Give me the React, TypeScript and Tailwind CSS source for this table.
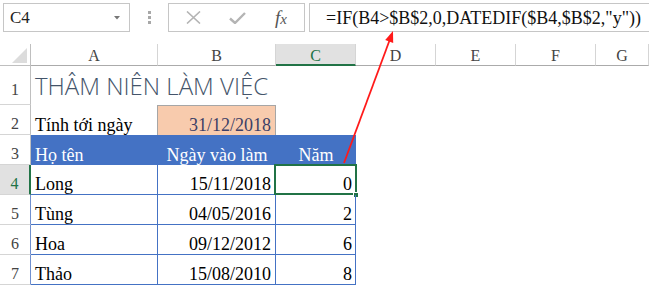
import React from "react";

const serif = "font-['Liberation_Serif','Times_New_Roman',serif]";

const cols = ["A", "B", "C", "D", "E", "F", "G"];

type Row = { name: string; date: string; years: number };

const rows: Row[] = [
  { name: "Long", date: "15/11/2018", years: 0 },
  { name: "Tùng", date: "04/05/2016", years: 2 },
  { name: "Hoa", date: "09/12/2012", years: 6 },
  { name: "Thảo", date: "15/08/2010", years: 8 },
];

const gridCols = "grid grid-cols-[31px_127px_118px_80px_80px_80px_80px_1fr]";

function RowHead({ n, h, pb, active, edge }: { n: number; h: string; pb: string; active?: boolean; edge?: string }) {
  return (
    <div
      className={`flex items-end justify-center border-b border-b-[#d5d5d5] text-[16px] leading-[16px] ${h} ${pb} ${
        active ? "border-r-2 border-r-[#217346] bg-[#e1e1e1] text-[#217346]" : `border-r ${edge ?? "border-r-[#bfbfbf]"} text-[#444]`
      }`}
    >
      {n}
    </div>
  );
}

function Toolbar() {
  return (
    <div className={`flex h-[29px] items-stretch ${serif}`}>
      <div className="ml-[3px] flex w-[127px] items-center justify-between border border-[#c6c6c6] pl-[6px] pr-[9px]">
        <span className="text-[17px] leading-none text-[#222]">C4</span>
        <svg width="6" height="4" viewBox="0 0 6 4">
          <path d="M0 0H6L3 3.5Z" fill="#777" />
        </svg>
      </div>
      <div className="flex w-[38px] flex-col items-center justify-center gap-[2px]">
        <span className="h-[3px] w-[3px] bg-[#a8a8a8]" />
        <span className="h-[3px] w-[3px] bg-[#a8a8a8]" />
        <span className="h-[3px] w-[3px] bg-[#a8a8a8]" />
      </div>
      <div className="flex w-[137px] items-center border border-[#c6c6c6]">
        <div className="flex w-[46px] justify-center pl-[2px]">
          <svg width="15" height="13" viewBox="0 0 15 13">
            <path d="M1 0.5L14 12.5M14 0.5L1 12.5" stroke="#b4b4b4" strokeWidth="1.6" />
          </svg>
        </div>
        <div className="flex w-[44px] justify-center">
          <svg width="17" height="12" viewBox="0 0 17 12">
            <path d="M1 6.5L6 11L16 1" stroke="#b4b4b4" strokeWidth="2.4" fill="none" />
          </svg>
        </div>
        <div className="flex w-[44px] justify-center">
          <span className="text-[19px] italic leading-none text-[#555]">
            f<span className="text-[15px]">x</span>
          </span>
        </div>
      </div>
      <div className="ml-[4px] flex flex-1 items-center border border-r-0 border-[#c6c6c6] pl-[16px]">
        <span className="text-[18px] leading-none text-[#111]">=IF(B4&gt;$B$2,0,DATEDIF($B4,$B$2,"y"))</span>
      </div>
    </div>
  );
}

function ColumnHeader() {
  return (
    <div className={`${gridCols} mt-[12px] h-[22px] ${serif}`}>
      <div className="relative border-r border-b border-[#bfbfbf]">
        <svg className="absolute left-[12px] top-[4px]" width="15" height="15" viewBox="0 0 15 15">
          <path d="M15 0V15H0Z" fill="#dcdcdc" />
        </svg>
      </div>
      {cols.map((c) =>
        c === "C" ? (
          <div
            key={c}
            className="flex items-end justify-center border-r border-r-[#d5d5d5] border-b-2 border-b-[#217346] bg-[#e1e1e1] text-[16px] leading-[16px] text-[#217346]"
          >
            {c}
          </div>
        ) : (
          <div
            key={c}
            className="flex items-end justify-center border-r border-b border-r-[#d5d5d5] border-b-[#ababab] pb-[1px] text-[16px] leading-[16px] text-[#444]"
          >
            {c}
          </div>
        )
      )}
    </div>
  );
}

function Blank({ n }: { n: number }) {
  return (
    <>
      {Array.from({ length: n }).map((_, i) => (
        <div key={i} />
      ))}
    </>
  );
}

export default function App() {
  return (
    <div className="relative h-[289px] w-[649px] overflow-hidden bg-white pt-[3px]">
      <Toolbar />
      <ColumnHeader />

      <div className={serif}>
        {/* row 1 */}
        <div className={`${gridCols} h-[39px]`}>
          <RowHead n={1} h="h-[39px]" pb="pb-[6px]" />
          <div className="flex items-end whitespace-nowrap pl-[4px] pb-[1px]">
            <span className="font-['Open_Sans','Noto_Sans',sans-serif] text-[24px] font-light text-[#44546a]">
              THÂM NIÊN LÀM VIỆC
            </span>
          </div>
          <Blank n={6} />
        </div>

        {/* row 2 */}
        <div className={`${gridCols} h-[30px]`}>
          <RowHead n={2} h="h-[30px]" pb="pb-[2px]" />
          <div className="flex items-end border-r border-r-[#a6a6a6] px-[4px] pb-[1px] text-[18px] leading-[18px] whitespace-nowrap text-black">
            Tính tới ngày
          </div>
          <div className="flex items-end justify-end border-t border-r border-[#a6a6a6] bg-[#f8cbad] px-[4px] pb-[1px] text-[18px] leading-[18px] text-[#3d3f66]">
            31/12/2018
          </div>
          <Blank n={5} />
        </div>

        {/* row 3 */}
        <div className={`${gridCols} h-[30px]`}>
          <RowHead n={3} h="h-[30px]" pb="pb-[2px]" />
          <div className="flex items-end bg-[#4472c4] px-[4px] pb-[1px] text-[18px] leading-[18px] text-white">Họ tên</div>
          <div className="flex items-end justify-center bg-[#4472c4] pb-[1px] text-[18px] leading-[18px] whitespace-nowrap text-white">
            Ngày vào làm
          </div>
          <div className="flex items-end justify-center bg-[#4472c4] pb-[1px] text-[18px] leading-[18px] text-white">Năm</div>
          <Blank n={4} />
        </div>

        {/* rows 4-7 */}
        {rows.map((r, i) => (
          <div key={r.name} className={`${gridCols} h-[30px]`}>
            <RowHead n={i + 4} h="h-[30px]" pb="pb-[2px]" active={i === 0} edge="border-r-[#6f8fcf]" />
            <div className="flex items-end border-r border-b border-[#4472c4] px-[4px] pb-[1px] text-[18px] leading-[18px] text-black">
              {r.name}
            </div>
            <div className="flex items-end justify-end border-r border-b border-[#4472c4] px-[4px] pb-[1px] text-[18px] leading-[18px] text-black">
              {r.date}
            </div>
            <div className="relative flex items-end justify-end border-r border-b border-[#4472c4] px-[3px] pb-[1px] text-[18px] leading-[18px] text-black">
              {r.years}
              {i === 0 && (
                <>
                  <div className="pointer-events-none absolute -left-[2px] -top-[1px] -right-[2px] -bottom-[1px] border-2 border-[#217346]" />
                  <div className="absolute -right-[4px] -bottom-[4px] h-[6px] w-[6px] border border-white bg-[#217346]" />
                </>
              )}
            </div>
            <Blank n={4} />
          </div>
        ))}
      </div>

      {/* red arrow annotation */}
      <svg className="pointer-events-none absolute left-0 top-0" width="649" height="289" viewBox="0 0 649 289">
        <line x1="344" y1="163" x2="389.5" y2="40.5" stroke="#ff1a1a" strokeWidth="1.8" />
        <path d="M393 31L393.2 43L385.2 40Z" fill="#ff1a1a" />
      </svg>
    </div>
  );
}
